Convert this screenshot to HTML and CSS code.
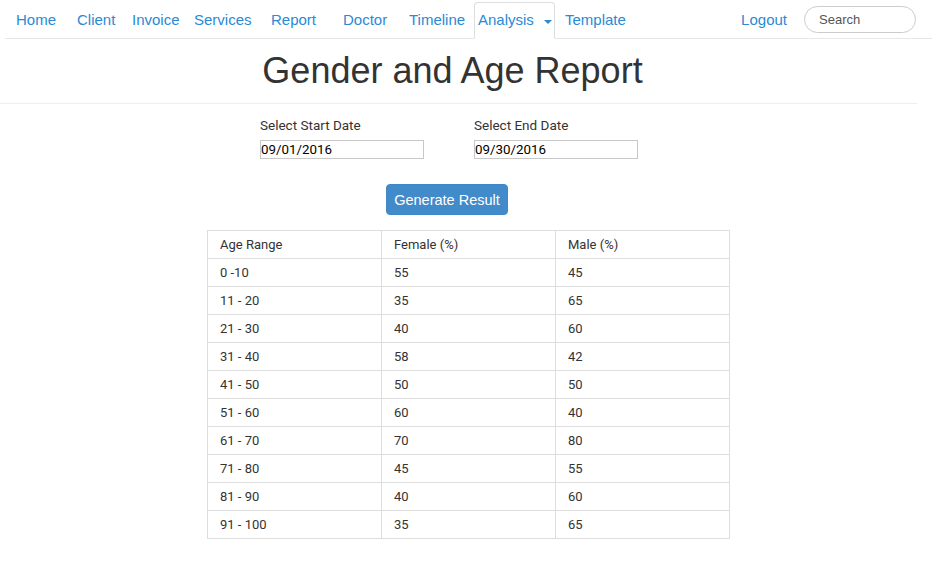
FILE: index.html
```html
<!DOCTYPE html>
<html>
<head>
<meta charset="utf-8">
<link rel="stylesheet" href="styles.css">
</head>
<body>
<nav class="navbar">
  <ul class="nav-links">
    <li class="nav-item w-home"><a href="#">Home</a></li>
    <li class="nav-item w-client"><a href="#">Client</a></li>
    <li class="nav-item w-invoice"><a href="#">Invoice</a></li>
    <li class="nav-item w-services"><a href="#">Services</a></li>
    <li class="nav-item w-report"><a href="#">Report</a></li>
    <li class="nav-item w-doctor"><a href="#">Doctor</a></li>
    <li class="nav-item w-timeline"><a href="#">Timeline</a></li>
    <li class="nav-item active"><a href="#">Analysis</a><span class="caret"></span></li>
    <li class="nav-item w-template"><a href="#">Template</a></li>
  </ul>
  <div class="nav-right">
    <a class="logout" href="#">Logout</a>
    <input class="search" type="text" placeholder="Search">
  </div>
</nav>

<header class="page-header">
  <h1 class="title">Gender and Age Report</h1>
</header>

<section class="date-form">
  <div class="field">
    <label class="field-label">Select Start Date</label>
    <input class="date-input" type="text" value="09/01/2016">
  </div>
  <div class="field">
    <label class="field-label">Select End Date</label>
    <input class="date-input" type="text" value="09/30/2016">
  </div>
</section>

<div class="actions">
  <button class="btn-primary">Generate Result</button>
</div>

<table class="report">
  <thead>
    <tr><th>Age Range</th><th>Female (%)</th><th>Male (%)</th></tr>
  </thead>
  <tbody>
    <tr><td>0 -10</td><td>55</td><td>45</td></tr>
    <tr><td>11 - 20</td><td>35</td><td>65</td></tr>
    <tr><td>21 - 30</td><td>40</td><td>60</td></tr>
    <tr><td>31 - 40</td><td>58</td><td>42</td></tr>
    <tr><td>41 - 50</td><td>50</td><td>50</td></tr>
    <tr><td>51 - 60</td><td>60</td><td>40</td></tr>
    <tr><td>61 - 70</td><td>70</td><td>80</td></tr>
    <tr><td>71 - 80</td><td>45</td><td>55</td></tr>
    <tr><td>81 - 90</td><td>40</td><td>60</td></tr>
    <tr><td>91 - 100</td><td>35</td><td>65</td></tr>
  </tbody>
</table>
</body>
</html>
```

FILE: styles.css
```css
html, body {
  margin: 0;
  padding: 0;
  background: #fff;
}
body {
  font-family: Roboto, "Liberation Sans", Arial, sans-serif;
  font-size: 13px;
  color: #333;
}

.navbar {
  display: flex;
  align-items: stretch;
  height: 38px;
  margin: 0 5px;
  border-bottom: 1px solid #e7e7e7;
  font-family: "Liberation Sans", Arial, sans-serif;
  font-size: 15px;
}
.nav-links {
  display: flex;
  list-style: none;
  margin: 0;
  padding: 0 0 0 11px;
}
.nav-item {
  padding-top: 10px;
  line-height: 20px;
}
.nav-item a {
  color: #2a8ad4;
  text-decoration: none;
}
.w-home { width: 61px; }
.w-client { width: 55px; }
.w-invoice { width: 62px; }
.w-services { width: 77px; }
.w-report { width: 72px; }
.w-doctor { width: 66px; }
.w-timeline { width: 65px; }
.w-template { margin-left: 10px; }

.nav-item.active {
  display: flex;
  align-items: flex-start;
  box-sizing: border-box;
  width: 81px;
  height: 37px;
  margin-top: 2px;
  margin-bottom: -1px;
  padding: 7px 0 0 3px;
  border: 1px solid #ddd;
  border-bottom: 1px solid #fff;
  border-radius: 4px 4px 0 0;
  background: #fff;
}
.caret {
  width: 0;
  height: 0;
  margin: 10px 0 0 10px;
  border-left: 4px solid transparent;
  border-right: 4px solid transparent;
  border-top: 4px solid #2a8ad4;
}

.nav-right {
  display: flex;
  align-items: flex-start;
  margin-left: auto;
  margin-right: 16px;
}
.logout {
  margin-top: 10px;
  line-height: 20px;
  color: #2a8ad4;
  text-decoration: none;
}
.search {
  box-sizing: border-box;
  width: 112px;
  height: 27px;
  margin: 6px 0 0 17px;
  padding: 0 14px;
  border: 1px solid #ccc;
  border-radius: 14px;
  font-family: "Liberation Sans", Arial, sans-serif;
  font-size: 13px;
  color: #555;
  outline: none;
}
.search::placeholder {
  color: #555;
}

.page-header {
  width: 917px;
  border-bottom: 1px solid #eee;
}
.title {
  margin: 12px 0 0;
  padding: 0 12px 12px 0;
  text-align: center;
  font-family: "Liberation Sans", Arial, sans-serif;
  font-weight: normal;
  font-size: 36px;
  line-height: 40px;
  color: #333;
}

.date-form {
  display: flex;
  gap: 50px;
  padding: 13px 0 0 260px;
}
.field {
  display: flex;
  flex-direction: column;
  width: 164px;
}
.field-label {
  font-size: 13.5px;
  line-height: 16px;
  margin-bottom: 7px;
  color: #333;
}
.date-input {
  box-sizing: border-box;
  width: 164px;
  height: 19px;
  margin: 0;
  padding: 0;
  border: 1px solid #c8c8c8;
  font-family: Roboto, "Liberation Sans", Arial, sans-serif;
  font-size: 13.33px;
  color: #000;
}

.actions {
  padding: 25px 0 0 386px;
}
.btn-primary {
  box-sizing: border-box;
  width: 122px;
  height: 31px;
  padding: 0;
  border: 1px solid #3f87c6;
  border-radius: 4px;
  background: #428bca;
  color: #fff;
  font-family: "Liberation Sans", Arial, sans-serif;
  font-size: 14.5px;
}

.report {
  margin: 15px 0 0 207px;
  width: 523px;
  border-collapse: collapse;
  border: 1px solid #ddd;
  table-layout: fixed;
}
.report th,
.report td {
  height: 27px;
  padding: 0 12px;
  border: 1px solid #ddd;
  text-align: left;
  font-weight: normal;
  line-height: 27px;
  color: #333;
}
```
